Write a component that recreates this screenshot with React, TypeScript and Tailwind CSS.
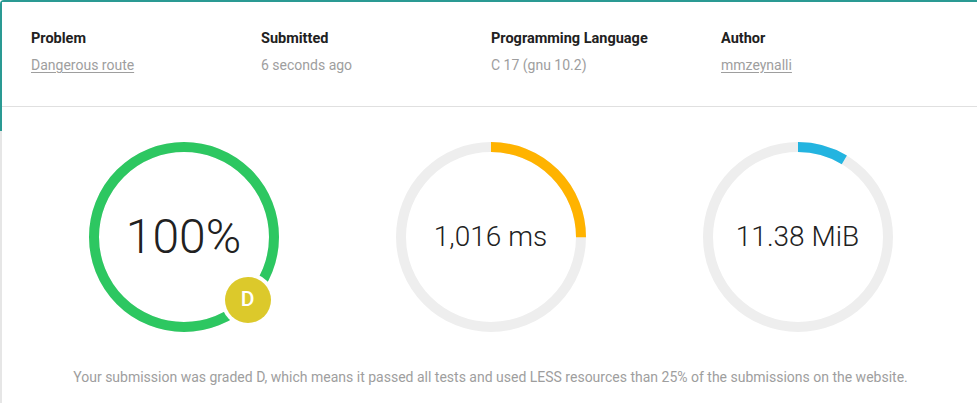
import React from 'react';

const TEAL = '#2a9a93';

interface RingProps {
  value: number;
  color: string;
  label: string;
  big?: boolean;
  badge?: string;
}

const Ring: React.FC<RingProps> = ({ value, color, label, big, badge }) => {
  const r = 90;
  const c = 2 * Math.PI * r;
  return (
    <div className="w-[307px] flex justify-center">
      <div className="relative w-[190px] h-[190px]">
        <svg width="190" height="190" viewBox="0 0 190 190" className="block">
          <circle cx="95" cy="95" r={r} fill="none" stroke="#eeeeee" strokeWidth="10" />
          <circle
            cx="95"
            cy="95"
            r={r}
            fill="none"
            stroke={color}
            strokeWidth="10"
            strokeDasharray={`${(c * value) / 100} ${c}`}
            transform="rotate(-90 95 95)"
          />
        </svg>
        <div className="absolute inset-0 flex items-center justify-center">
          <span className={`font-light text-[#212121] ${big ? 'text-[48px]' : 'text-[28px]'}`}>{label}</span>
        </div>
        {badge && (
          <div className="absolute left-[132px] top-[131px] w-[54px] h-[54px] rounded-full bg-white flex items-center justify-center">
            <div className="w-[46px] h-[46px] rounded-full bg-[#dcc92b] flex items-center justify-center text-white text-[21px] font-medium">
              {badge}
            </div>
          </div>
        )}
      </div>
    </div>
  );
};

const Field: React.FC<{ title: string; value: string; link?: boolean }> = ({ title, value, link }) => (
  <div className="w-[230px] flex flex-col gap-[6px]">
    <div className="text-[14.5px] leading-5 font-bold text-[#212121]">{title}</div>
    <div className={`text-[14px] leading-5 text-[#9e9e9e] ${link ? 'underline underline-offset-2' : ''}`}>{value}</div>
  </div>
);

export default function App() {
  return (
    <div className="w-[977px] h-[403px] flex bg-white overflow-hidden rounded-tl-[4px]" style={{ fontFamily: 'Roboto, "Noto Sans", sans-serif' }}>
      <div className="w-[2px] flex flex-col">
        <div className="h-[131px]" style={{ backgroundColor: TEAL }} />
        <div className="flex-1 bg-[#e6e6e6]" />
      </div>
      <div className="flex-1 flex flex-col border-t-2 border-[#2a9a93]">
        <div className="h-[105px] flex pl-[29px] pt-[27px] border-b border-[#e0e0e0]">
          <Field title="Problem" value="Dangerous route" link />
          <Field title="Submitted" value="6 seconds ago" />
          <Field title="Programming Language" value="C 17 (gnu 10.2)" />
          <Field title="Author" value="mmzeynalli" link />
        </div>
        <div className="flex pl-[28px] pt-[35px]">
          <Ring value={100} color="#2dc761" label="100%" big badge="D" />
          <Ring value={25} color="#ffb300" label="1,016 ms" />
          <Ring value={8.6} color="#23b4e0" label="11.38 MiB" />
        </div>
        <div className="pt-[35px] pl-[28px] w-[949px] text-center text-[14px] leading-5 text-[#9e9e9e]">
          Your submission was graded D, which means it passed all tests and used LESS resources than 25% of the submissions on the website.
        </div>
      </div>
    </div>
  );
}
